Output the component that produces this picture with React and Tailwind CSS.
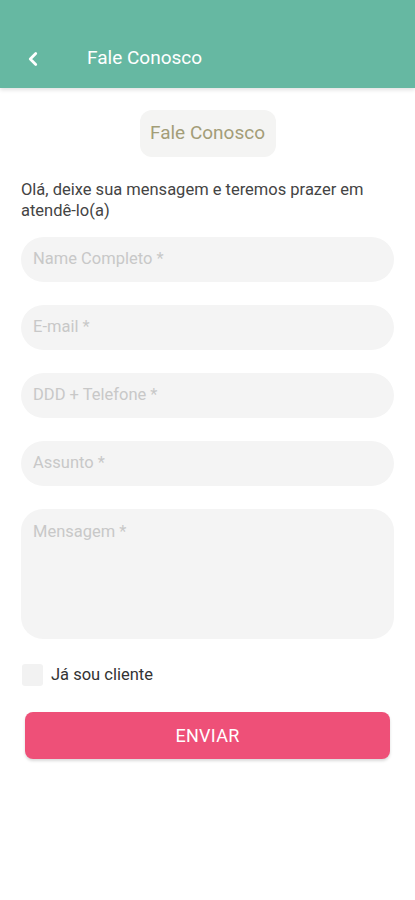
import { ChevronLeft } from 'lucide-react';

const fields = ['Name Completo *', 'E-mail *', 'DDD + Telefone *', 'Assunto *'];

export default function App() {
  return (
    <div className="min-h-[900px] bg-white font-['Roboto',sans-serif]">
      <header className="h-[88px] bg-[#66b8a2] flex items-end pb-[18px] shadow-[0_2px_4px_rgba(0,0,0,0.12)]">
        <button className="w-[66px] flex justify-center text-white">
          <ChevronLeft className="w-[22px] h-[22px]" strokeWidth={3} />
        </button>
        <h1 className="ml-[21px] text-white text-[19px] leading-[24px]">Fale Conosco</h1>
      </header>

      <div className="flex justify-center mt-[22px]">
        <div className="w-[136px] h-[47px] rounded-[12px] bg-[#f4f4f3] flex items-center justify-center text-[19px] text-[#a39d78]">
          Fale Conosco
        </div>
      </div>

      <p className="mx-[21px] mt-[22px] text-[16.5px] leading-[21px] text-[#444]">
        Olá, deixe sua mensagem e teremos prazer em atendê-lo(a)
      </p>

      <div className="mx-[21px] mt-[16px] flex flex-col gap-[23px]">
        {fields.map((f) => (
          <div
            key={f}
            className="h-[45px] rounded-full bg-[#f4f4f4] flex items-center px-[12px] text-[16.5px] text-[#c8c8c8]"
          >
            {f}
          </div>
        ))}
        <div className="h-[130px] rounded-[22px] bg-[#f4f4f4] px-[12px] pt-[13px] text-[16.5px] leading-[20px] text-[#c8c8c8]">
          Mensagem *
        </div>
      </div>

      <label className="mx-[22px] mt-[24px] flex items-center gap-[8px]">
        <span className="w-[21px] h-[22px] rounded-[3px] bg-[#f2f2f2]" />
        <span className="text-[16.5px] text-[#333]">Já sou cliente</span>
      </label>

      <div className="mx-[25px] mt-[24px]">
        <button className="w-full h-[47px] rounded-[8px] bg-[#ee5078] text-white text-[18px] tracking-[0.3px] shadow-[0_2px_3px_rgba(0,0,0,0.15)]">
          ENVIAR
        </button>
      </div>
    </div>
  );
}
